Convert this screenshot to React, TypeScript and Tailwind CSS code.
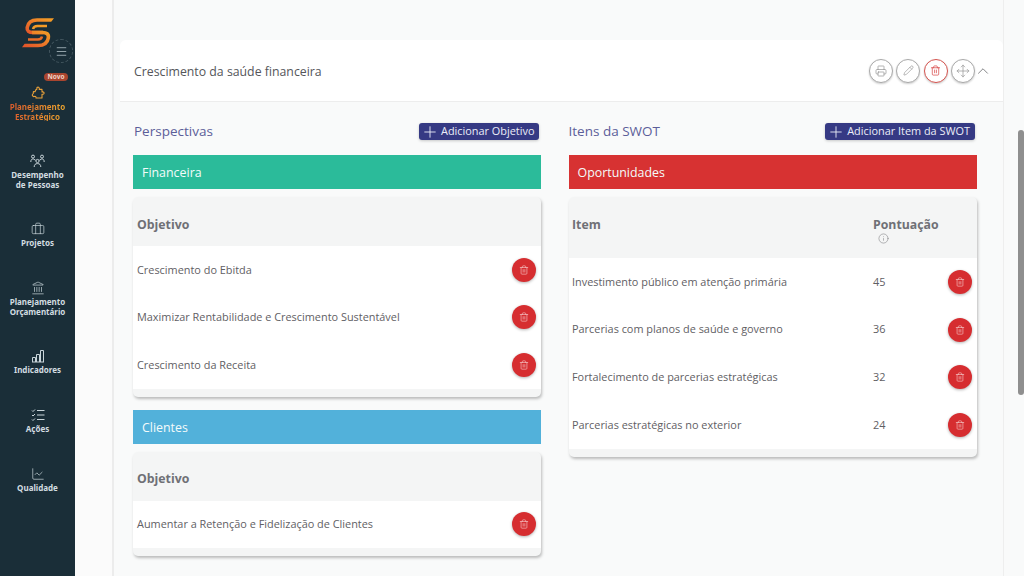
import React from "react";
import { Printer, Pencil, Trash2, Move, ChevronUp, Plus, Info, Menu, Briefcase, Landmark, ChartLine } from "lucide-react";

function Logo() {
  return (
    <svg width="32" height="30" viewBox="0 0 32 30" fill="none" strokeLinecap="butt">
      <defs>
        <linearGradient id="lg" x1="0" y1="1" x2="1" y2="0">
          <stop offset="0" stopColor="#e4582a" />
          <stop offset="1" stopColor="#f49b26" />
        </linearGradient>
      </defs>
      <path d="M28 2 H15 C9.5 2 6 5 5.2 9.5 C4.7 13 7 14.5 11 14.5 H21" stroke="url(#lg)" strokeWidth="3.6" />
      <path d="M28 0.2 L32 0.2 L29.2 3.8 L28 3.8 Z" fill="#f49b26" />
      <path d="M25 8 H15.5 C13 8 11.5 9 11 11" stroke="#f49b26" strokeWidth="2.5" />
      <path d="M10 14.5 H20.5 C24.5 14.5 27 16 26.3 20 C25.5 25 21.5 27.5 16 27.5 H4" stroke="url(#lg)" strokeWidth="3.6" />
      <path d="M4 25.7 L2.6 25.7 L0 29.3 L4 29.3 Z" fill="#e4582a" />
      <path d="M6 21.5 H16 C18.3 21.5 19.6 20.4 20 18.5" stroke="#ea6d28" strokeWidth="2.5" />
    </svg>
  );
}

function PuzzleIcon() {
  return (
    <svg width="14" height="14" viewBox="0 0 14 14" fill="none" stroke="currentColor" strokeWidth="1.1" strokeLinejoin="round">
      <path d="M6 1.5 C7 0.8 8.3 1.2 8.3 2.6 L8.2 3.4 L11 3.4 L11 6 C12.6 5.6 13.4 6.6 13 7.6 C12.7 8.4 11.8 8.4 11 8.2 L11 12 L5 12 C5.2 10.8 4.5 10.2 3.6 10.4 L2.5 10.6 C1 9.8 0.8 8.5 2.2 7.6 L2.4 5.6 L4 5.8 L5 3.6 L5.8 3.4 Z" />
    </svg>
  );
}

function PeopleIcon() {
  return (
    <svg width="15" height="14" viewBox="0 0 15 14" fill="none" stroke="currentColor" strokeWidth="1">
      <circle cx="3" cy="2.6" r="1.5" />
      <circle cx="12" cy="2.6" r="1.5" />
      <circle cx="7.5" cy="7" r="1.6" />
      <path d="M0.8 8 C0.8 5.6 2 4.8 3.4 5 L5.6 6.2 M14.2 8 C14.2 5.6 13 4.8 11.6 5 L9.4 6.2" />
      <path d="M4.2 13 C4.2 10.6 5.4 9.6 7.5 9.6 C9.6 9.6 10.8 10.6 10.8 13" />
    </svg>
  );
}

function BarsIcon() {
  return (
    <svg width="14" height="14" viewBox="0 0 14 14" fill="none" stroke="currentColor" strokeWidth="1">
      <path d="M1.5 13 V8.5 H4.5 V13 M5.5 13 V5.5 H8.5 V13 M9.5 13 V1.5 H12.5 V13 M1 13 H13" />
    </svg>
  );
}

function ChecksIcon() {
  return (
    <svg width="14" height="14" viewBox="0 0 14 14" fill="none" stroke="currentColor" strokeWidth="1">
      <path d="M1 2.5 L2 3.5 L4 1.5 M1 7 L2 8 L4 6 M1 11.5 L2 12.5 L4 10.5" />
      <path d="M6 2.5 H13.5 M6 7 H13.5 M6 11.5 H13.5" />
    </svg>
  );
}

function NavItem({ icon, lines, active, className }: { icon: React.ReactNode; lines: string[]; active?: boolean; className: string }) {
  return (
    <div className={`flex flex-col items-center ${className}`}>
      <div className={`h-[14px] flex items-center ${active ? "text-[#e8a13a]" : "text-[#c9d5da]"}`}>{icon}</div>
      <div className={`mt-[2px] text-center text-[8px] leading-[9.5px] font-bold [font-family:'Noto_Sans',sans-serif] ${active ? "bg-gradient-to-r from-[#dd5b2c] to-[#eba52f] bg-clip-text text-transparent" : "text-[#d3dde1]"}`}>
        {lines.map((l) => (
          <div key={l}>{l}</div>
        ))}
      </div>
    </div>
  );
}

function Sidebar() {
  return (
    <aside className="w-[75px] shrink-0 bg-[#1a2e38] flex flex-col items-stretch relative">
      <div className="pl-[22px] pt-[18px]">
        <Logo />
      </div>
      <div className="absolute left-[49px] top-[39px] w-[24px] h-[24px] rounded-full border border-dashed border-[#43565f] flex items-center justify-center text-[#c5d3d8]">
        <Menu size={13} strokeWidth={1.3} />
      </div>
      <div className="flex justify-end pr-[7px] mt-[25px]">
        <span className="h-[8px] w-[24px] rounded-full bg-[#a8452f] text-[#f0d5c8] text-[6.5px] leading-[8px] text-center font-bold [font-family:'Noto_Sans',sans-serif]">Novo</span>
      </div>
      <NavItem className="mt-[5px]" active icon={<PuzzleIcon />} lines={["Planejamento", "Estratégico"]} />
      <NavItem className="mt-[33px]" icon={<PeopleIcon />} lines={["Desempenho", "de Pessoas"]} />
      <NavItem className="mt-[33px]" icon={<Briefcase size={14} strokeWidth={1.2} />} lines={["Projetos"]} />
      <NavItem className="mt-[33.5px]" icon={<Landmark size={14} strokeWidth={1.2} />} lines={["Planejamento", "Orçamentário"]} />
      <NavItem className="mt-[33px]" icon={<BarsIcon />} lines={["Indicadores"]} />
      <NavItem className="mt-[33.5px]" icon={<ChecksIcon />} lines={["Ações"]} />
      <NavItem className="mt-[33.5px]" icon={<ChartLine size={14} strokeWidth={1.2} />} lines={["Qualidade"]} />
    </aside>
  );
}

function RoundIcon({ children, red }: { children: React.ReactNode; red?: boolean }) {
  return (
    <div className={`w-[24px] h-[24px] rounded-full border-[1.5px] flex items-center justify-center bg-white shadow-[0_1px_2px_rgba(0,0,0,0.2)] ${red ? "border-[#d5544f] text-[#d32f2f]" : "border-[#a9a9a9] text-[#8b8b8b]"}`}>
      {children}
    </div>
  );
}

function DeleteBtn() {
  return (
    <div className="w-[24px] h-[24px] rounded-full bg-[#d62d30] flex items-center justify-center text-[#f6c9c9] shadow-[0_1px_3px_rgba(0,0,0,0.3)]">
      <Trash2 size={10} strokeWidth={1.5} />
    </div>
  );
}

function AddBtn({ label }: { label: string }) {
  return (
    <div className="h-[17px] rounded-[3px] bg-[#363a84] text-[#eceef8] flex items-center pl-[2px] pr-[4.5px] gap-[2px] text-[10.9px] shadow-[0_1px_3px_rgba(0,0,0,0.2)]">
      <Plus size={18} strokeWidth={1.2} />
      <span>{label}</span>
    </div>
  );
}

function Bar({ label, color }: { label: string; color: string }) {
  return <div className={`h-[34px] flex items-center pl-[9px] pt-[3px] text-[#f4fbfa] text-[12.4px] ${color}`}>{label}</div>;
}

function ObjectiveTable({ rows }: { rows: string[] }) {
  return (
    <div className="mt-[8px] rounded-[5px] bg-[#f4f5f5] overflow-hidden shadow-[1px_2px_3px_rgba(0,0,0,0.25)] pb-[8px]">
      <div className="h-[49px] flex items-center pl-[4px] pt-[7px] font-bold text-[12.3px] text-[#6f7076]">Objetivo</div>
      {rows.map((r) => (
        <div key={r} className="h-[47.5px] bg-white flex items-center justify-between pl-[4px] pr-[5px] text-[#5f6064] text-[10.9px]">
          <span>{r}</span>
          <DeleteBtn />
        </div>
      ))}
    </div>
  );
}

function SwotTable({ rows }: { rows: [string, string][] }) {
  return (
    <div className="mt-[8px] rounded-[5px] bg-[#f4f5f5] overflow-hidden shadow-[1px_2px_3px_rgba(0,0,0,0.25)] pb-[8px]">
      <div className="h-[61px] flex pl-[3.5px] pt-[19px] font-bold text-[12.3px] leading-[17px] text-[#6f7076]">
        <div className="w-[301px]">Item</div>
        <div>
          <div>Pontuação</div>
          <Info size={11} strokeWidth={1.2} className="ml-[5px] text-[#7c7d80]" />
        </div>
      </div>
      {rows.map(([a, b]) => (
        <div key={a} className="h-[47.7px] bg-white flex items-center pl-[3.5px] pr-[5px] text-[#5f6064] text-[10.9px]">
          <span className="w-[301px]">{a}</span>
          <span className="flex-1">{b}</span>
          <DeleteBtn />
        </div>
      ))}
    </div>
  );
}

export default function App() {
  return (
    <div className="w-full h-[576px] overflow-hidden flex bg-[#f9fafa] text-[#5f6064] [font-family:'Open_Sans',sans-serif] relative">
      <Sidebar />
      <div className="w-[39px] shrink-0 bg-[#fbfbfb] border-r-2 border-[#ececec]" />
      <main className="w-[890px] shrink-0 pl-[6px] pt-[40px] border-r border-[#eeeeee]">
        <section className="w-[883px] rounded-t-[6px]">
          <header className="h-[62px] bg-white rounded-t-[6px] border-b border-[#ededed] flex items-center justify-between pl-[14px] pr-[11.7px]">
            <span className="pt-[3px] text-[12.3px] text-[#55565a]">Crescimento da saúde financeira</span>
            <div className="flex items-center gap-[3.4px]">
              <RoundIcon><Printer size={12} strokeWidth={1.3} /></RoundIcon>
              <RoundIcon><Pencil size={11} strokeWidth={1.3} /></RoundIcon>
              <RoundIcon red><Trash2 size={11} strokeWidth={1.4} /></RoundIcon>
              <RoundIcon><Move size={14} strokeWidth={1.1} /></RoundIcon>
              <ChevronUp size={18} strokeWidth={1.2} className="-ml-[4px] -mr-[1px] text-[#77787a]" />
            </div>
          </header>
          <div className="flex pl-[13px] pt-[21px] gap-[27.5px]">
            <div className="w-[408px]">
              <div className="flex items-center justify-between h-[17px] pr-[2px] text-[#5c5e99] text-[13.5px]">
                <span className="pl-[1px]">Perspectivas</span>
                <AddBtn label="Adicionar Objetivo" />
              </div>
              <div className="mt-[15px]">
                <Bar label="Financeira" color="bg-[#2bbb9a]" />
                <ObjectiveTable rows={["Crescimento do Ebitda", "Maximizar Rentabilidade e Crescimento Sustentável", "Crescimento da Receita"]} />
              </div>
              <div className="mt-[13px]">
                <Bar label="Clientes" color="bg-[#52b1da]" />
                <ObjectiveTable rows={["Aumentar a Retenção e Fidelização de Clientes"]} />
              </div>
            </div>
            <div className="w-[408px]">
              <div className="flex items-center justify-between h-[17px] pr-[2px] text-[#5c5e99] text-[13.5px]">
                <span>Itens da SWOT</span>
                <AddBtn label="Adicionar Item da SWOT" />
              </div>
              <div className="mt-[15px]">
                <Bar label="Oportunidades" color="bg-[#d73232]" />
                <SwotTable rows={[["Investimento público em atenção primária", "45"], ["Parcerias com planos de saúde e governo", "36"], ["Fortalecimento de parcerias estratégicas", "32"], ["Parcerias estratégicas no exterior", "24"]]} />
              </div>
            </div>
          </div>
        </section>
      </main>
      <div className="flex-1 relative">
        <div className="absolute right-0 top-[130px] w-[6px] h-[265px] rounded-[3px] bg-[#8f8f8f]" />
      </div>
    </div>
  );
}
